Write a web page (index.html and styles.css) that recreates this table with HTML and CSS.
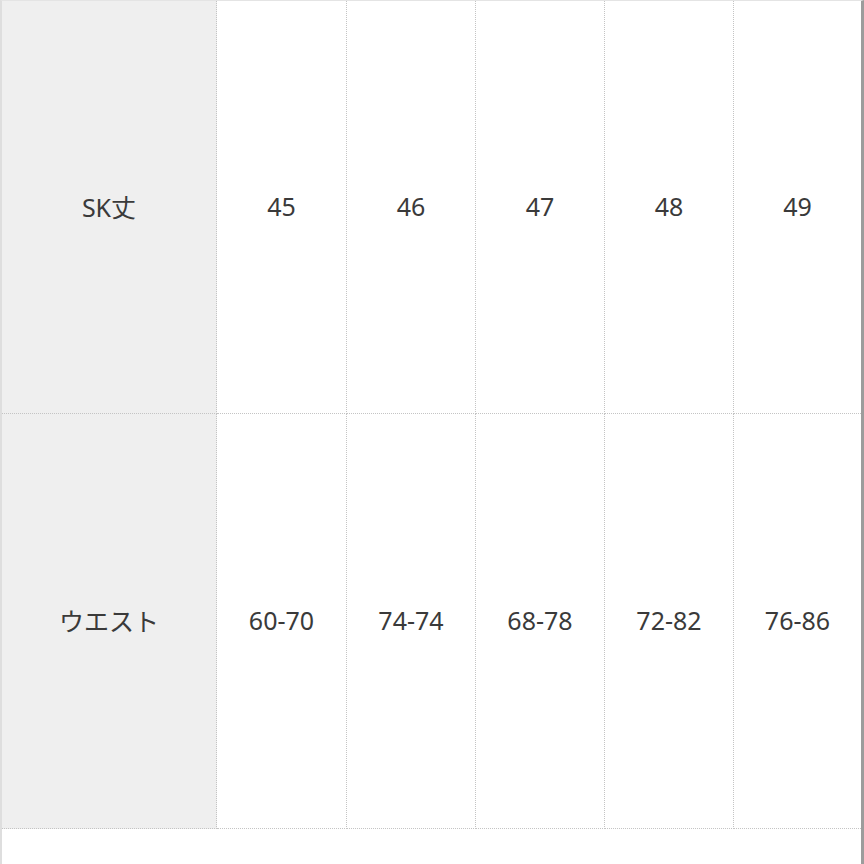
FILE: index.html
```html
<!DOCTYPE html>
<html lang="ja">
<head>
<meta charset="utf-8">
<title>サイズ表</title>
<link rel="stylesheet" href="styles.css">
</head>
<body>
<div class="frame">
  <div class="grid">
    <div class="cell head">SK丈</div>
    <div class="cell">45</div>
    <div class="cell">46</div>
    <div class="cell">47</div>
    <div class="cell">48</div>
    <div class="cell last">49</div>
    <div class="cell head">ウエスト</div>
    <div class="cell">60-70</div>
    <div class="cell">74-74</div>
    <div class="cell">68-78</div>
    <div class="cell">72-82</div>
    <div class="cell last">76-86</div>
  </div>
  <div class="tail"></div>
</div>
</body>
</html>
```
FILE: styles.css
```css
html, body {
  margin: 0;
  padding: 0;
  background: #ffffff;
}
.frame {
  width: 864px;
  height: 864px;
  box-sizing: border-box;
  border-left: 2px solid #dedede;
  border-right: 3px solid #9c9c9c;
  border-top: 1px solid #e4e4e4;
  overflow: hidden;
  font-family: "Noto Sans", "Noto Sans CJK JP", sans-serif;
  color: #3a3a3a;
}
.grid {
  display: grid;
  grid-template-columns: 215px 130px 129px 129px 129px 127px;
  grid-template-rows: 413px 415px;
}
.cell {
  display: flex;
  align-items: center;
  justify-content: center;
  font-size: 25px;
  padding-bottom: 2px;
  border-right: 1px dotted #c4c4c4;
  border-bottom: 1px dotted #c4c4c4;
  background: #ffffff;
}
.cell.last {
  border-right: none;
}
.cell.head {
  background: #efefef;
}
.tail {
  height: 40px;
  background: #ffffff;
}
```
